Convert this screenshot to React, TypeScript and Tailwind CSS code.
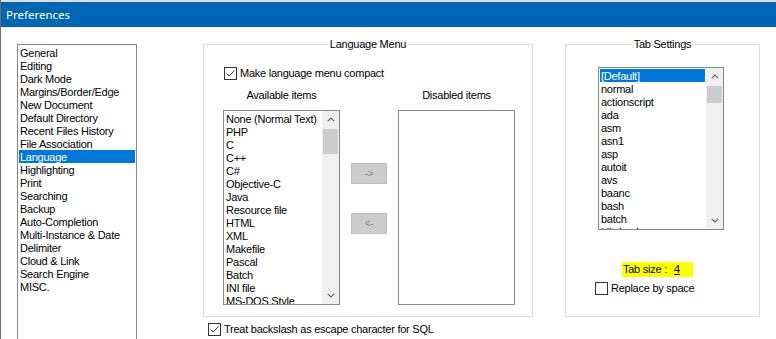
import React from "react";

const sections = [
  "General",
  "Editing",
  "Dark Mode",
  "Margins/Border/Edge",
  "New Document",
  "Default Directory",
  "Recent Files History",
  "File Association",
  "Language",
  "Highlighting",
  "Print",
  "Searching",
  "Backup",
  "Auto-Completion",
  "Multi-Instance & Date",
  "Delimiter",
  "Cloud & Link",
  "Search Engine",
  "MISC.",
];

const available = [
  "None (Normal Text)",
  "PHP",
  "C",
  "C++",
  "C#",
  "Objective-C",
  "Java",
  "Resource file",
  "HTML",
  "XML",
  "Makefile",
  "Pascal",
  "Batch",
  "INI file",
  "MS-DOS Style",
];

const tabLangs = [
  "[Default]",
  "normal",
  "actionscript",
  "ada",
  "asm",
  "asn1",
  "asp",
  "autoit",
  "avs",
  "baanc",
  "bash",
  "batch",
  "blitzbasic",
];

const Chevron: React.FC<{ up?: boolean }> = ({ up }) => (
  <svg width="8" height="5" viewBox="0 0 8 5" className={up ? "" : "rotate-180"}>
    <polyline points="0.8,4.2 4,1 7.2,4.2" fill="none" stroke="#606060" strokeWidth="1.2" />
  </svg>
);

const ScrollBar: React.FC<{ thumb: number }> = ({ thumb }) => (
  <div className="w-[17px] h-full bg-[#f0f0f0] flex flex-col shrink-0">
    <div className="h-[17px] flex items-center justify-center shrink-0">
      <Chevron up />
    </div>
    <div className="flex-1 px-[1px] pt-[1px]">
      <div className="bg-[#cdcdcd]" style={{ height: thumb }} />
    </div>
    <div className="h-[17px] flex items-center justify-center shrink-0">
      <Chevron />
    </div>
  </div>
);

const ListBox: React.FC<{
  items: string[];
  selected?: number;
  thumb?: number;
  className: string;
}> = ({ items, selected, thumb, className }) => (
  <div className={`border border-[#828790] bg-white flex overflow-hidden ${className}`}>
    <div className="flex-1 p-[1px] overflow-hidden">
      {items.map((it, i) => (
        <div
          key={it}
          className={`h-[13px] leading-[15px] pl-[1px] whitespace-nowrap ${
            i === selected ? "bg-[#0078d7] text-white" : ""
          }`}
        >
          {it}
        </div>
      ))}
    </div>
    {thumb !== undefined && <ScrollBar thumb={thumb} />}
  </div>
);

const CheckBox: React.FC<{ checked?: boolean }> = ({ checked }) => (
  <span className="w-[13px] h-[13px] border border-[#333333] bg-white flex items-center justify-center shrink-0">
    {checked && (
      <svg width="11" height="11" viewBox="0 0 11 11">
        <polyline points="1.5,5.5 4,8 9.5,2.5" fill="none" stroke="#333333" strokeWidth="1" />
      </svg>
    )}
  </span>
);

const ArrowButton: React.FC<{ label: string }> = ({ label }) => (
  <button
    disabled
    className="w-[36px] h-[21px] bg-[#cccccc] border border-[#bfbfbf] text-[#838383] text-[10px] leading-none flex items-center justify-center"
  >
    {label}
  </button>
);

const App: React.FC = () => {
  return (
    <div
      className="w-[776px] h-[339px] overflow-hidden bg-white flex flex-col text-[11px] leading-[13px] tracking-[-0.25px] text-black border-l border-[#6f6f6f]"
      style={{ fontFamily: '"Liberation Sans", Arial, sans-serif' }}
    >
      <div className="h-[2px] bg-[#dedede] shrink-0" />
      <div
        className="h-[25px] bg-[#0066b4] text-white text-[11.5px] tracking-normal flex items-center pl-[5px] shrink-0"
        style={{ fontFamily: '"Noto Sans", "Liberation Sans", sans-serif' }}
      >
        Preferences
      </div>

      <div className="flex-1 flex items-start overflow-hidden">
        <ListBox items={sections} selected={8} className="ml-[16px] mt-[17px] w-[120px] h-[300px] shrink-0" />

        <div className="ml-[66px] mt-[11px] flex flex-col shrink-0">
          <fieldset className="w-[330px] h-[279px] border border-[#dcdcdc]">
            <legend className="mx-auto px-[2px] leading-[13px]">Language Menu</legend>
            <div className="pl-[19px]">
              <label className="mt-[16px] ml-[1px] flex items-center gap-[3px]">
                <CheckBox checked />
                <span>Make language menu compact</span>
              </label>
              <div className="flex mt-[9px]">
                <div className="w-[117px] flex flex-col items-center">
                  <div>Available items</div>
                  <ListBox items={available} thumb={25} className="mt-[8px] w-[117px] h-[195px]" />
                </div>
                <div className="w-[36px] mx-[11px] pt-[74px] flex flex-col gap-[29px]">
                  <ArrowButton label="->" />
                  <ArrowButton label="<-" />
                </div>
                <div className="w-[117px] flex flex-col items-center">
                  <div>Disabled items</div>
                  <ListBox items={[]} className="mt-[8px] w-[117px] h-[195px]" />
                </div>
              </div>
            </div>
          </fieldset>
          <label className="mt-[6px] ml-[5px] flex items-center gap-[3px]">
            <CheckBox checked />
            <span>Treat backslash as escape character for SQL</span>
          </label>
        </div>

        <fieldset className="ml-[32px] mt-[11px] w-[195px] h-[279px] border border-[#dcdcdc] shrink-0">
          <legend className="mx-auto px-[2px] leading-[13px]">Tab Settings</legend>
          <ListBox items={tabLangs} selected={0} thumb={17} className="mt-[16px] ml-[32px] w-[126px] h-[163px]" />
          <div className="mt-[32px] ml-[56px] w-[71px] h-[15px] bg-[#ffff00] flex items-center pl-[1px]">
            <span>Tab size :</span>
            <span className="ml-[7px] underline">4</span>
          </div>
          <label className="mt-[5px] ml-[29px] flex items-center gap-[3px]">
            <CheckBox />
            <span>Replace by space</span>
          </label>
        </fieldset>
      </div>
    </div>
  );
};

export default App;
